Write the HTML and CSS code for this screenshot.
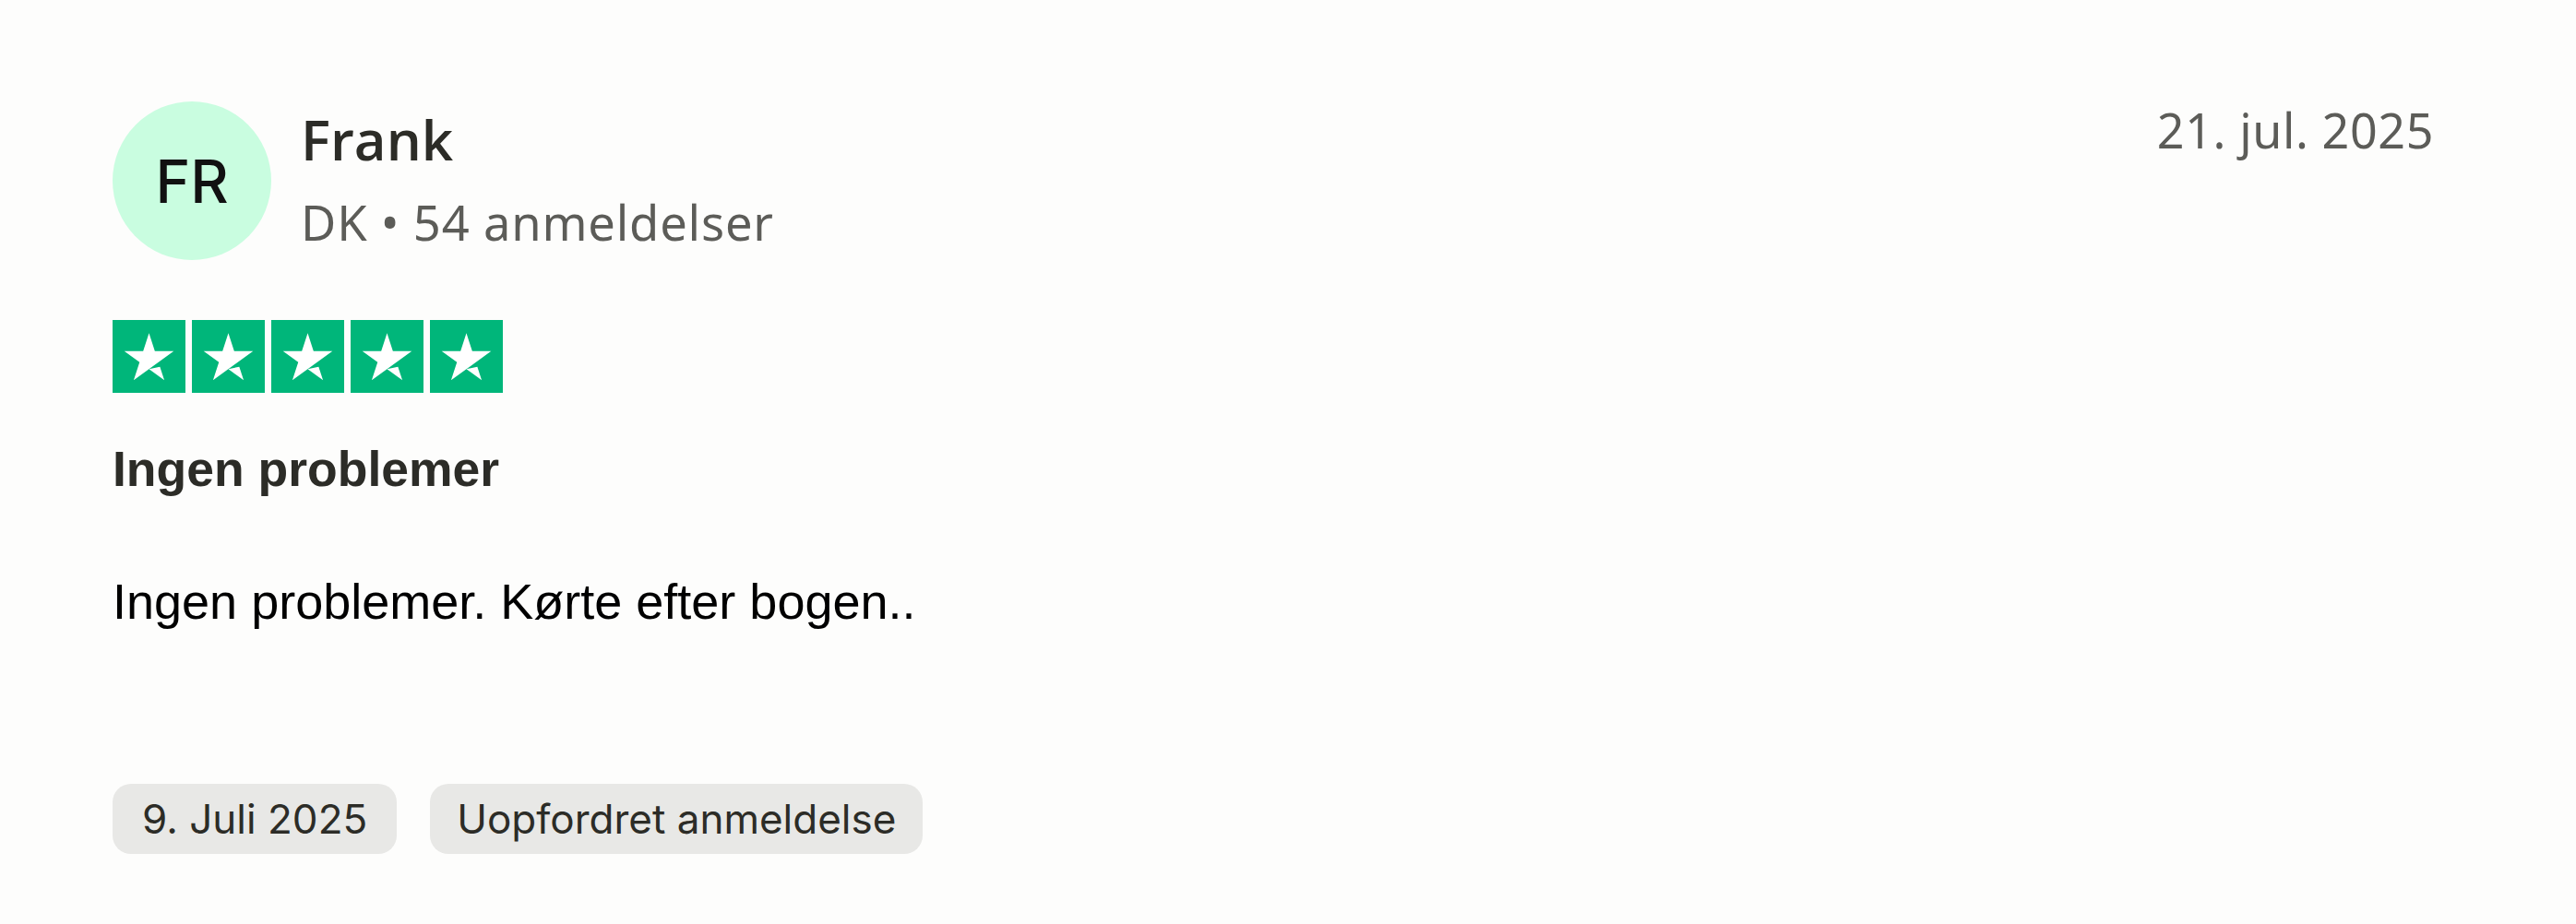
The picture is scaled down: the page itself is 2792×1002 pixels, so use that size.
FILE: index.html
```html
<!DOCTYPE html>
<html lang="da">
<head>
  <meta charset="UTF-8" />
  <meta name="viewport" content="width=device-width, initial-scale=1.0" />
  <title>Anmeldelse - Frank</title>
  <link rel="stylesheet" href="styles.css">
</head>
<body>
  <article class="review">
    <div class="review-header">
      <div class="user">
        <div class="avatar">FR</div>
        <div class="user-info">
          <div class="name">Frank</div>
          <div class="meta">DK • 54 anmeldelser</div>
        </div>
      </div>
      <time class="posted">21. jul. 2025</time>
    </div>

    <div class="stars">
      <span class="star"><svg viewBox="0 0 79 79"><polygon points="39.5,14.3 45.83,33.79 66.32,33.79 22.92,65.31 29.26,45.83 12.68,33.79 33.17,33.79" /><polygon points="39.5,53.27 51.33,50.7 56.08,65.31" /></svg></span>
      <span class="star"><svg viewBox="0 0 79 79"><polygon points="39.5,14.3 45.83,33.79 66.32,33.79 22.92,65.31 29.26,45.83 12.68,33.79 33.17,33.79" /><polygon points="39.5,53.27 51.33,50.7 56.08,65.31" /></svg></span>
      <span class="star"><svg viewBox="0 0 79 79"><polygon points="39.5,14.3 45.83,33.79 66.32,33.79 22.92,65.31 29.26,45.83 12.68,33.79 33.17,33.79" /><polygon points="39.5,53.27 51.33,50.7 56.08,65.31" /></svg></span>
      <span class="star"><svg viewBox="0 0 79 79"><polygon points="39.5,14.3 45.83,33.79 66.32,33.79 22.92,65.31 29.26,45.83 12.68,33.79 33.17,33.79" /><polygon points="39.5,53.27 51.33,50.7 56.08,65.31" /></svg></span>
      <span class="star"><svg viewBox="0 0 79 79"><polygon points="39.5,14.3 45.83,33.79 66.32,33.79 22.92,65.31 29.26,45.83 12.68,33.79 33.17,33.79" /><polygon points="39.5,53.27 51.33,50.7 56.08,65.31" /></svg></span>
    </div>

    <h2 class="title">Ingen problemer</h2>
    <p class="text">Ingen problemer. Kørte efter bogen..</p>

    <div class="tags">
      <span class="tag tag-date">9. Juli 2025</span>
      <span class="tag">Uopfordret anmeldelse</span>
    </div>
  </article>
</body>
</html>
```

FILE: styles.css
```css
body {
  margin: 0;
  background: #fdfdfc;
  color: #2c2c27;
  font-family: 'Noto Sans', 'Open Sans', sans-serif;
}
.review {
  padding: 110px 154px 0 122px;
}
.review-header {
  display: flex;
  justify-content: space-between;
  align-items: flex-start;
}
.user {
  display: flex;
  align-items: center;
  gap: 32px;
}
.avatar {
  width: 172px;
  height: 172px;
  border-radius: 50%;
  background-color: #c9fde0;
  color: #111;
  font-family: Inter, 'Liberation Sans', sans-serif;
  font-size: 64px;
  font-weight: 500;
  display: flex;
  align-items: center;
  justify-content: center;
}
.name {
  font-family: 'Open Sans', 'Noto Sans', sans-serif;
  font-size: 60px;
  font-weight: 600;
  line-height: 1.2;
  color: #2c2c27;
}
.meta {
  font-size: 52.5px;
  letter-spacing: 0.8px;
  line-height: 1.4;
  margin-top: 17px;
  color: #5c5c58;
}
.posted {
  font-size: 52px;
  letter-spacing: 0.6px;
  line-height: 1.2;
  color: #5c5c58;
}
.stars {
  display: flex;
  gap: 7px;
  margin-top: 65px;
}
.star {
  width: 79px;
  height: 79px;
  background-color: #00b67a;
}
.star svg {
  display: block;
  width: 79px;
  height: 79px;
  fill: #fff;
}
.title {
  margin: 48px 0 0;
  font-family: 'Liberation Sans', Arial, sans-serif;
  font-size: 53.5px;
  font-weight: 700;
  line-height: 1.3;
  color: #2c2c27;
}
.text {
  margin: 73px 0 0;
  font-family: 'Liberation Sans', Arial, sans-serif;
  font-size: 54px;
  line-height: 1.3;
  color: #000;
}
.tags {
  display: flex;
  gap: 36px;
  margin-top: 163px;
}
.tag {
  height: 76px;
  line-height: 76px;
  padding: 0 29px;
  border-radius: 20px;
  background-color: #e8e8e6;
  font-family: Inter, 'Noto Sans', sans-serif;
  font-size: 44px;
  color: #2c2c27;
}
.tag-date {
  padding: 0 32px;
}
```
